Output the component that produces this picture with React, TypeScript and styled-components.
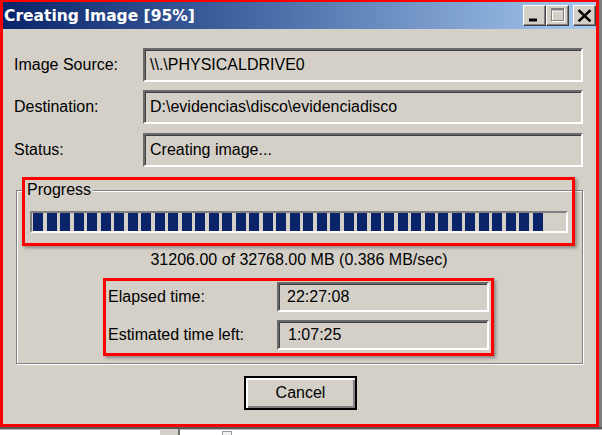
import React from "react";
import styled, { createGlobalStyle } from "styled-components";

const GlobalStyle = createGlobalStyle`
  html, body { margin: 0; padding: 0; background: #ffffff; }
  body { font-family: "Liberation Sans", Arial, sans-serif; }
  * { box-sizing: border-box; }
`;

const Screen = styled.div`
  position: relative;
  width: 602px;
  height: 435px;
  overflow: hidden;
  background: #ffffff;
  display: flex;
  flex-direction: column;
`;

const TopArea = styled.div`
  display: flex;
  height: 427px;
  flex: none;
`;

const Window = styled.div`
  width: 599px;
  height: 427px;
  border: 3px solid #ff0000;
  border-top-width: 2px;
  background: #d4d0c8;
  display: flex;
  flex-direction: column;
`;

const RightShade = styled.div`
  width: 3px;
  background: #7d7d7d;
`;

const BottomStrip = styled.div`
  flex: 1;
  border-top: 2px solid #585858;
  box-shadow: inset 0 1px 0 #b9b9b9;
  display: flex;
  align-items: stretch;
  padding-left: 160px;
`;

const StripBlock = styled.div`
  width: 20px;
  background: #d4d0c8;
  border-right: 2px solid #6e6e6e;
`;

const StripIcon = styled.div`
  width: 10px;
  margin-left: 42px;
  margin-top: 2px;
  border: 1px solid #9a9a9a;
  border-bottom: none;
  background: #f2f2f2;
`;

const TitleBar = styled.div`
  height: 27px;
  flex: none;
  display: flex;
  align-items: center;
  background: linear-gradient(90deg, #0a246a 0%, #3a5c9a 35%, #a6caf0 100%);
`;

const Title = styled.span`
  flex: 1;
  color: #ffffff;
  font: bold 15.5px "DejaVu Sans", Verdana, sans-serif;
  padding-left: 1px;
  white-space: nowrap;
`;

const TitleButtons = styled.div`
  display: flex;
  align-self: flex-start;
  margin-top: 3px;
`;

const CaptionButton = styled.button<{ $gap?: number }>`
  width: 23px;
  height: 21px;
  padding: 0;
  margin: 0 0 0 ${(p) => p.$gap ?? 0}px;
  background: #d4d0c8;
  border: 1px solid;
  border-color: #ffffff #404040 #404040 #ffffff;
  box-shadow: inset -1px -1px 0 #808080;
  display: block;
  position: relative;

  svg {
    position: absolute;
    left: 0;
    top: 0;
    display: block;
  }
`;

const Body = styled.div`
  flex: 1;
  display: flex;
  flex-direction: column;
  padding: 19px 13px 0 11px;
`;

const FieldRow = styled.div<{ $gap: number }>`
  display: grid;
  grid-template-columns: 129px 440px;
  align-items: center;
  margin-top: ${(p) => p.$gap}px;
`;

const Label = styled.span`
  font-size: 16px;
  color: #000000;
  white-space: nowrap;
`;

const Field = styled.div<{ $h: number; $pad: number }>`
  height: ${(p) => p.$h}px;
  border: 2px solid;
  border-color: #6a6a6a #ffffff #ffffff #6a6a6a;
  box-shadow: inset 1px 1px 0 #404040;
  display: flex;
  align-items: center;
  padding-left: ${(p) => p.$pad}px;
  font-size: 16px;
  color: #000000;
  white-space: nowrap;
  overflow: hidden;
`;

const GroupBox = styled.div`
  position: relative;
  margin: 23px 0 0 2px;
  width: 567px;
  border: 1px solid #808080;
  box-shadow: inset 1px 1px 0 #ffffff, 1px 1px 0 #ffffff;
  padding: 20px 14px 13px 13px;
  display: flex;
  flex-direction: column;
`;

const Legend = styled.span`
  position: absolute;
  top: -10px;
  left: 8px;
  padding: 0 2px;
  background: #d4d0c8;
  font-size: 16px;
  line-height: 18px;
  color: #000000;
`;

const ProgressTrack = styled.div`
  height: 22px;
  border: 2px solid;
  border-color: #808080 #ffffff #ffffff #808080;
  display: flex;
  gap: 3.5px;
  padding: 0 1px;
`;

const ProgressBlock = styled.div`
  width: 10px;
  flex: none;
  background: #0a246a;
`;

const Rate = styled.div`
  margin-top: 18px;
  line-height: 18px;
  font-size: 16px;
  text-align: center;
  color: #000000;
`;

const TimeRow = styled.div<{ $gap: number }>`
  display: grid;
  grid-template-columns: 169px 212px;
  align-items: center;
  padding-left: 78px;
  margin-top: ${(p) => p.$gap}px;
`;

const CancelButton = styled.button`
  align-self: flex-start;
  margin: 12px 0 0 230px;
  width: 113px;
  height: 34px;
  background: #d4d0c8;
  border: 2px solid #000000;
  box-shadow: inset 2px 2px 0 #ffffff, inset -2px -2px 0 #808080;
  font-family: "Liberation Sans", Arial, sans-serif;
  font-size: 16px;
  color: #000000;
  padding: 0;
`;

const Annotation = styled.div<{ $x: number; $y: number; $w: number; $h: number }>`
  position: absolute;
  left: ${(p) => p.$x}px;
  top: ${(p) => p.$y}px;
  width: ${(p) => p.$w}px;
  height: ${(p) => p.$h}px;
  border: 3px solid #ff0000;
  box-shadow: 2px 2px 3px rgba(0, 0, 0, 0.35);
  pointer-events: none;
`;

const MinGlyph = () => (
  <svg width="21" height="19" viewBox="0 0 21 19">
    <rect x="5" y="12.5" width="8" height="3" fill="#000" />
  </svg>
);

const MaxGlyph = () => (
  <svg width="21" height="19" viewBox="0 0 21 19">
    <g fill="none" stroke="#ffffff" transform="translate(1 1)">
      <rect x="4.5" y="2.5" width="12" height="12" />
      <line x1="4" y1="3.5" x2="17" y2="3.5" strokeWidth="2" />
    </g>
    <g fill="none" stroke="#808080">
      <rect x="4.5" y="2.5" width="12" height="12" />
      <line x1="4" y1="3.5" x2="17" y2="3.5" strokeWidth="2" />
    </g>
  </svg>
);

const CloseGlyph = () => (
  <svg width="21" height="19" viewBox="0 0 21 19">
    <g stroke="#000" strokeWidth="2.6" strokeLinecap="square">
      <line x1="5.5" y1="5" x2="15.5" y2="14.5" />
      <line x1="15.5" y1="5" x2="5.5" y2="14.5" />
    </g>
  </svg>
);

const PERCENT = 95;
const TOTAL_BLOCKS = 40;

export default function App() {
  const blocks = Math.floor((PERCENT / 100) * TOTAL_BLOCKS);
  return (
    <Screen>
      <GlobalStyle />
      <TopArea>
        <Window>
          <TitleBar>
            <Title>Creating Image [{PERCENT}%]</Title>
            <TitleButtons>
              <CaptionButton aria-label="Minimize">
                <MinGlyph />
              </CaptionButton>
              <CaptionButton aria-label="Maximize">
                <MaxGlyph />
              </CaptionButton>
              <CaptionButton aria-label="Close" $gap={4}>
                <CloseGlyph />
              </CaptionButton>
            </TitleButtons>
          </TitleBar>
          <Body>
            <FieldRow $gap={0}>
              <Label>Image Source:</Label>
              <Field $h={34} $pad={5}>\\.\PHYSICALDRIVE0</Field>
            </FieldRow>
            <FieldRow $gap={8}>
              <Label>Destination:</Label>
              <Field $h={34} $pad={5}>D:\evidencias\disco\evidenciadisco</Field>
            </FieldRow>
            <FieldRow $gap={9}>
              <Label>Status:</Label>
              <Field $h={34} $pad={5}>Creating image...</Field>
            </FieldRow>
            <GroupBox>
              <Legend>Progress</Legend>
              <ProgressTrack>
                {Array.from({ length: blocks }, (_, i) => (
                  <ProgressBlock key={i} />
                ))}
              </ProgressTrack>
              <Rate>31206.00 of 32768.00 MB (0.386 MB/sec)</Rate>
              <TimeRow $gap={13}>
                <Label>Elapsed time:</Label>
                <Field $h={30} $pad={8}>22:27:08</Field>
              </TimeRow>
              <TimeRow $gap={8}>
                <Label>Estimated time left:</Label>
                <Field $h={30} $pad={9}>1:07:25</Field>
              </TimeRow>
            </GroupBox>
            <CancelButton>Cancel</CancelButton>
          </Body>
        </Window>
        <RightShade />
      </TopArea>
      <BottomStrip>
        <StripBlock />
        <StripIcon />
      </BottomStrip>
      <Annotation $x={22} $y={177} $w={553} $h={69} />
      <Annotation $x={103} $y={278} $w={391} $h={78} />
    </Screen>
  );
}
